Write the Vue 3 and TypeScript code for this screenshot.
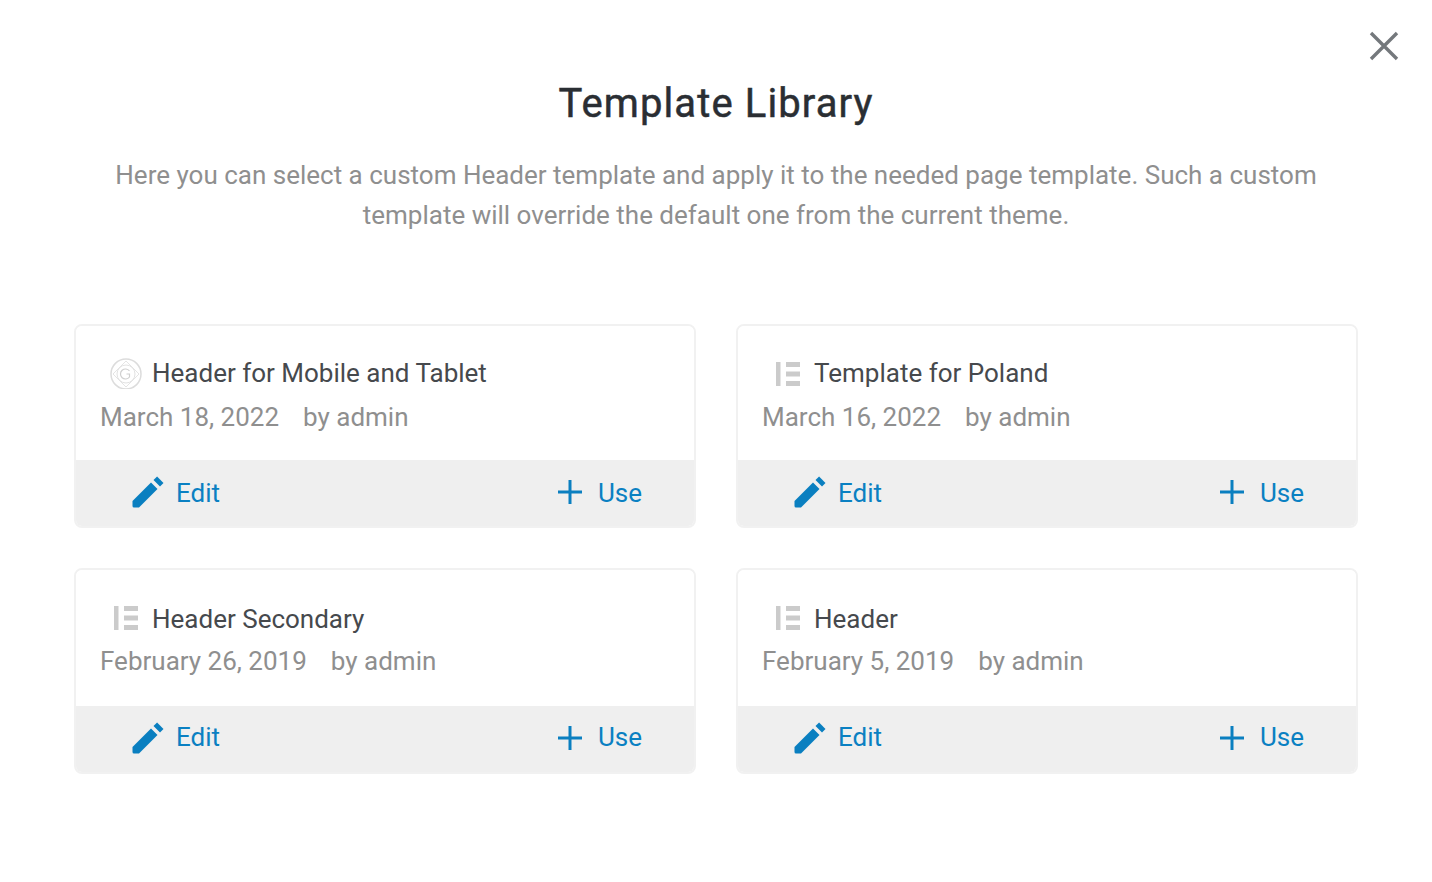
<script setup lang="ts">
interface Template {
  title: string;
  date: string;
  author: string;
  icon: 'gutenberg' | 'elementor';
}

const templates: Template[] = [
  { title: 'Header for Mobile and Tablet', date: 'March 18, 2022', author: 'by admin', icon: 'gutenberg' },
  { title: 'Template for Poland', date: 'March 16, 2022', author: 'by admin', icon: 'elementor' },
  { title: 'Header Secondary', date: 'February 26, 2019', author: 'by admin', icon: 'elementor' },
  { title: 'Header', date: 'February 5, 2019', author: 'by admin', icon: 'elementor' },
];
</script>

<template>
  <div class="modal">
    <button class="close" type="button" aria-label="Close">
      <svg width="32" height="32" viewBox="0 0 32 32">
        <path d="M3 3L29 29M29 3L3 29" stroke="#74787c" stroke-width="3.4" fill="none" />
      </svg>
    </button>

    <h1 class="title">Template Library</h1>
    <p class="desc">
      Here you can select a custom Header template and apply it to the needed page template. Such a custom<br />
      template will override the default one from the current theme.
    </p>

    <div class="grid">
      <div v-for="(t, i) in templates" :key="t.title" class="card" :class="{ lower: i > 1 }">
        <div class="body">
          <div class="name">
            <svg v-if="t.icon === 'gutenberg'" class="type" width="32" height="32" viewBox="0 -1 32 32">
              <circle cx="16" cy="16" r="15" fill="none" stroke="#dcdcdc" stroke-width="1.5" />
              <path d="M16 3L29 16L16 29L3 16Z" fill="none" stroke="#e4e4e4" stroke-width="1" />
              <circle cx="16" cy="16" r="9" fill="none" stroke="#e2e2e2" stroke-width="1" />
              <path d="M19.5 13a5 5 0 1 0 0 6v-3h-3" fill="none" stroke="#cfcfcf" stroke-width="1.2" />
            </svg>
            <svg v-else class="type" width="32" height="32" viewBox="0 0 32 32">
              <path
                d="M4 5h4.500v24H4zM14 5h14v5H14zM14 14.500h14v5H14zM14 24h14v5H14z"
                fill="#cbcbcb"
              />
            </svg>
            <span>{{ t.title }}</span>
          </div>
          <div class="meta">
            <span>{{ t.date }}</span>
            <span>{{ t.author }}</span>
          </div>
        </div>
        <div class="actions">
          <a class="action edit">
            <svg width="32" height="32" viewBox="0 0 32 32">
              <path d="M.5 25L19 6.500L25.500 13L7 31.500H2Q.5 31.500 .5 30Z" fill="#0a7fc0" />
              <path d="M25.100 .5L31.500 6.900L28 10.500L21.500 4.100Z" fill="#0a7fc0" />
            </svg>
            <span>Edit</span>
          </a>
          <a class="action use">
            <svg width="24" height="24" viewBox="0 0 24 24">
              <path d="M12 0V24M0 12H24" stroke="#0a7fc0" stroke-width="3" fill="none" />
            </svg>
            <span>Use</span>
          </a>
        </div>
      </div>
    </div>
  </div>
</template>

<style>
html,
body {
  margin: 0;
  background: #fff;
}
</style>

<style scoped>
.modal {
  position: relative;
  width: 1432px;
  height: 882px;
  box-sizing: border-box;
  padding: 79px 74px 0;
  font-family: Roboto, "Liberation Sans", sans-serif;
  overflow: hidden;
}
.close {
  position: absolute;
  top: 30px;
  left: 1368px;
  padding: 0;
  border: 0;
  background: none;
  line-height: 0;
}
.title {
  margin: 0;
  font-size: 40px;
  line-height: 50px;
  font-weight: 400;
  -webkit-text-stroke: 0.5px #2a2e33;
  letter-spacing: 1.1px;
  color: #2a2e33;
  text-align: center;
}
.desc {
  margin: 26px 0 0;
  font-size: 26px;
  line-height: 40px;
  color: #8f8f8f;
  text-align: center;
}
.grid {
  display: grid;
  grid-template-columns: 622px 622px;
  gap: 40px;
  margin-top: 89px;
}
.card {
  display: flex;
  flex-direction: column;
  height: 204px;
  box-sizing: border-box;
  border: 2px solid #f1f1f1;
  border-radius: 8px;
  overflow: hidden;
}
.card.lower {
  height: 206px;
}
.body {
  flex: 1;
  padding: 31px 24px 0;
  background: #fff;
}
.name {
  display: flex;
  align-items: center;
  gap: 10px;
  height: 32px;
  padding-left: 10px;
  font-size: 26px;
  color: #46494d;
}
.lower .name {
  margin-top: 2px;
}
.lower .type {
  margin-top: -4px;
}
.meta {
  display: flex;
  gap: 24px;
  margin-top: 12px;
  font-size: 26px;
  line-height: 32px;
  color: #8f8f8f;
}
.lower .meta {
  margin-top: 10px;
}
.actions {
  display: flex;
  justify-content: space-between;
  align-items: center;
  box-sizing: border-box;
  height: 68px;
  flex: none;
  margin: 0 -2px -2px;
  padding: 0 54px 4px 58px;
  background: #efefef;
}
.action {
  display: flex;
  align-items: center;
  font-size: 26px;
  color: #0a80c2;
}
.action span {
  margin-top: 2px;
}
.lower .action span {
  margin-top: 0;
  margin-bottom: 2px;
}
.edit {
  gap: 12px;
}
.use {
  gap: 16px;
}
</style>
